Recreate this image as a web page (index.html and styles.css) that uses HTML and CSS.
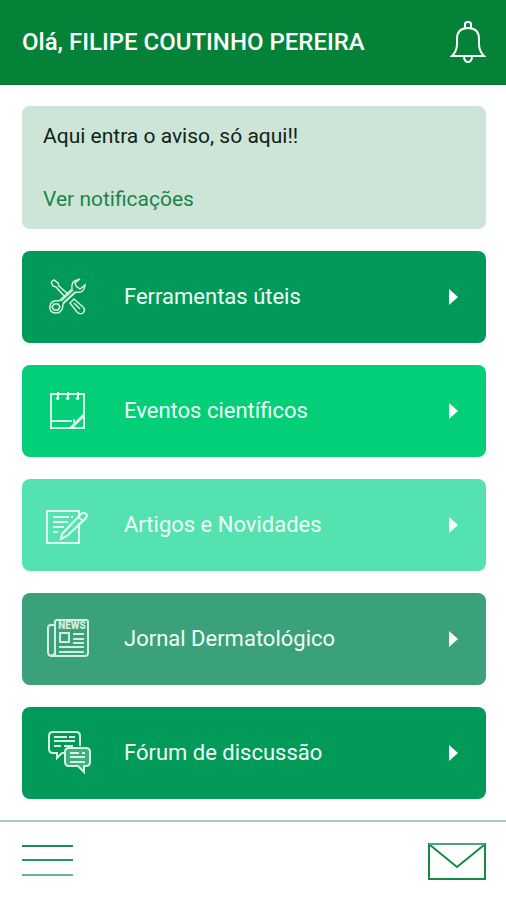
FILE: index.html
```html
<!DOCTYPE html>
<html lang="pt-BR">
<head>
    <meta charset="UTF-8">
    <meta name="viewport" content="width=device-width, initial-scale=1.0">
    <title>Início</title>
    <link rel="stylesheet" href="styles.css">
</head>
<body>
    <header class="topbar">
        <h1>Olá, FILIPE COUTINHO PEREIRA</h1>
        <button type="button" class="icon-button" aria-label="Notificações">
            <svg width="36" height="44" viewBox="0 0 36 44" fill="none" stroke="#fff" stroke-width="2">
                <path d="M15 9V4q0-2 3-2t3 2v5"/>
                <path d="M2 36q5-5 5-12v-5Q7 8 18 8t11 11v5q0 7 5 12z"/>
                <path d="M14 36q0 6 4 6t4-6"/>
            </svg>
        </button>
    </header>

    <main class="content">
        <section class="notice">
            <p>Aqui entra o aviso, só aqui!!</p>
            <a href="#">Ver notificações</a>
        </section>

        <nav class="menu">
            <a href="#" class="card green">
                <svg class="icon" width="48" height="48" viewBox="0 0 48 48" fill="none" stroke="#d5f0df" stroke-width="1.5">
                    <path d="M7 9l3-2 4 3 1 3 10 9M7 9l2 4 3 1 9 10"/>
                    <path d="M26 30l4-4 9 8q3 3 0 6-3 2-6-1z M30 30l6 6"/>
                    <path d="M33 7q-6 1-5 9L15 28q-8-1-9 5-1 7 6 7 7 0 7-9l13-12q8 2 9-7l-5 4-4-3-1-3 5-4-3 1z"/>
                    <path d="M17 28l12-11M19 30l12-11"/>
                    <path d="M10 31h4l2 3-2 3h-4l-2-3z"/>
                </svg>
                <span>Ferramentas úteis</span>
            </a>
            <a href="#" class="card mint">
                <svg class="icon" width="48" height="48" viewBox="0 0 48 48" fill="none" stroke="#d5ffe8" stroke-width="2">
                    <path d="M7 7h33v34H7z"/>
                    <path d="M7 34h21M30 32v4"/>
                    <path d="M27 41l13-13" stroke-width="3"/>
                    <path d="M14 5v7M24 5v7M34 5v7"/>
                    <path d="M12 11l2 1 1-1M22 11l2 1 1-1M32 11l2 1 1-1"/>
                </svg>
                <span>Eventos científicos</span>
            </a>
            <a href="#" class="card aqua">
                <svg class="icon" width="48" height="48" viewBox="0 0 48 48" fill="none" stroke="#e0fff2" stroke-width="2">
                    <path d="M35 22v20H3V10h32v4"/>
                    <path d="M9 16h16M27 16h2M9 21h15M9 26h11M9 31h5"/>
                    <path d="M18 33l18-19q2-3 5-2 3 2 1 5L23 35l-6 3zM34 16l5 4"/>
                </svg>
                <span>Artigos e Novidades</span>
            </a>
            <a href="#" class="card teal">
                <svg class="icon" width="48" height="48" viewBox="0 0 48 48" fill="none" stroke="#d2eee2" stroke-width="2">
                    <path d="M11 40V7q0-2 2-2h29q2 0 2 2v31q0 3-3 3H8q-4 0-4-4V13q0-3 3-3h4M11 10v26q0 5-4 4"/>
                    <path d="M16 18h9v9h-9zM29 19h11M29 24h11M29 28h11M15 32h25M15 37h25"/>
                    <text class="news" x="28" y="14" text-anchor="middle">NEWS</text>
                </svg>
                <span>Jornal Dermatológico</span>
            </a>
            <a href="#" class="card green">
                <svg class="icon" width="48" height="48" viewBox="0 0 48 48" fill="none" stroke="#d5f5e1" stroke-width="2">
                    <path d="M21 24h-3l-5 5v-5H9q-4 0-4-4V7q0-4 4-4h23q4 0 4 4v10"/>
                    <path d="M10 8h13M25 8h6M10 12h21M10 17h7M20 17h9"/>
                    <path d="M25 19h17q4 0 4 4v10q0 4-4 4h-2v6l-6-6h-9q-4 0-4-4V23q0-4 4-4z" fill="#3eaf7e"/>
                    <path d="M26 24h9M38 24h3M26 28h15M26 33h15"/>
                </svg>
                <span>Fórum de discussão</span>
            </a>
        </nav>
    </main>

    <footer class="bottombar">
        <button type="button" class="icon-button" aria-label="Menu">
            <svg width="52" height="34" viewBox="0 0 52 34" stroke-width="2">
                <path d="M0 2h51" stroke="#17914f"/>
                <path d="M0 16h51" stroke="#209a68"/>
                <path d="M0 31h51" stroke="#68b596"/>
            </svg>
        </button>
        <button type="button" class="icon-button" aria-label="Mensagens">
            <svg width="58" height="38" viewBox="0 0 58 38" fill="none" stroke="#138a45" stroke-width="2">
                <path d="M1 2h56v35H1z"/>
                <path d="M2 3l27 22L56 3"/>
                <path d="M1 2h56" stroke="#4aa777"/>
            </svg>
        </button>
    </footer>
</body>
</html>
```

FILE: styles.css
```css
* {
    box-sizing: border-box;
}

body {
    margin: 0;
    min-height: 100vh;
    display: flex;
    flex-direction: column;
    background-color: #fff;
    font-family: Roboto, Arial, sans-serif;
    font-size: 21px;
    line-height: 26px;
}

.topbar {
    display: flex;
    align-items: center;
    justify-content: space-between;
    height: 85px;
    padding: 0 20px 0 22px;
    background-color: #048238;
    border-bottom: 1px solid #04702a;
    color: #fff;
}

.topbar h1 {
    margin: 0;
    font-size: 24px;
    font-weight: 500;
}

.icon-button {
    padding: 0;
    border: none;
    background: none;
    cursor: pointer;
}

.icon-button svg {
    display: block;
}

.content {
    flex: 1;
    padding: 21px 20px 21px 22px;
}

.notice {
    padding: 17px 21px;
    margin-bottom: 22px;
    border-radius: 8px;
    background-color: #cde5d7;
    color: #10231a;
}

.notice p {
    margin: 0 0 37px;
}

.notice a {
    display: block;
    color: #1c8446;
    text-decoration: none;
}

.menu {
    display: flex;
    flex-direction: column;
    gap: 22px;
}

.card {
    display: flex;
    align-items: center;
    gap: 32px;
    height: 92px;
    padding: 0 28px 0 22px;
    border-radius: 8px;
    color: #effff6;
    font-size: 22px;
    text-decoration: none;
}

/* arrow */
.card::after {
    content: "";
    margin-left: auto;
    border-left: 9px solid #fff;
    border-top: 8px solid transparent;
    border-bottom: 8px solid transparent;
}

.green {
    background-color: #019a58;
}

.mint {
    background-color: #03cf79;
}

.aqua {
    background-color: #54e2b0;
}

.teal {
    background-color: #3aa17b;
}

.news {
    font-size: 10px;
    font-weight: 900;
    fill: #d2eee2;
    stroke: none;
}

.bottombar {
    display: flex;
    align-items: center;
    justify-content: space-between;
    height: 80px;
    padding: 0 20px 0 22px;
    border-top: 2px solid #a9cbbb;
}
```
